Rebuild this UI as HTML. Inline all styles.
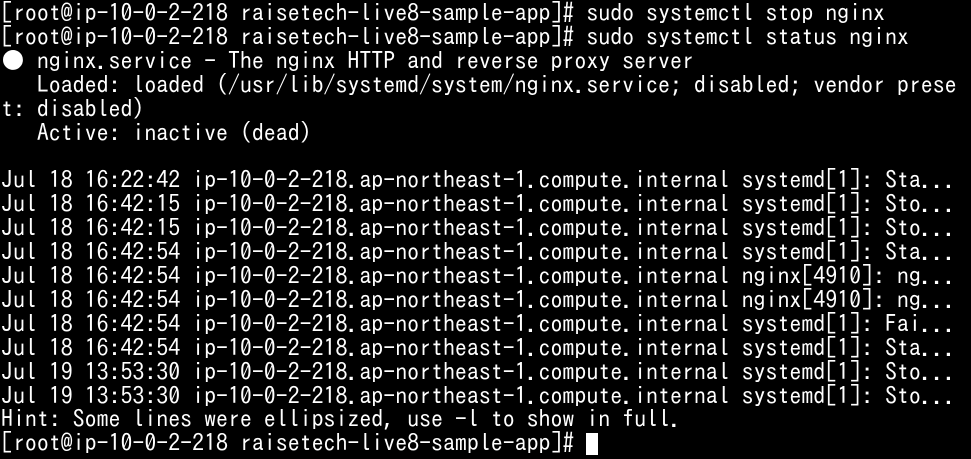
<!DOCTYPE html>
<html><head><meta charset="utf-8"><style>
html,body{margin:0;padding:0;background:#000;width:971px;height:459px;overflow:hidden}
pre{margin:0;padding:0 0 0 1px;color:#fff;font-family:"IPAGothic","Noto Sans CJK JP",monospace;font-size:23.9px;line-height:23.9px;position:relative;top:1px;white-space:pre}
.c{display:inline-block;width:12px;height:22px;background:#fff;vertical-align:-4px}
</style></head><body><pre>[root@ip-10-0-2-218 raisetech-live8-sample-app]# sudo systemctl stop nginx
[root@ip-10-0-2-218 raisetech-live8-sample-app]# sudo systemctl status nginx
● nginx.service - The nginx HTTP and reverse proxy server
   Loaded: loaded (/usr/lib/systemd/system/nginx.service; disabled; vendor prese
t: disabled)
   Active: inactive (dead)

Jul 18 16:22:42 ip-10-0-2-218.ap-northeast-1.compute.internal systemd[1]: Sta...
Jul 18 16:42:15 ip-10-0-2-218.ap-northeast-1.compute.internal systemd[1]: Sto...
Jul 18 16:42:15 ip-10-0-2-218.ap-northeast-1.compute.internal systemd[1]: Sto...
Jul 18 16:42:54 ip-10-0-2-218.ap-northeast-1.compute.internal systemd[1]: Sta...
Jul 18 16:42:54 ip-10-0-2-218.ap-northeast-1.compute.internal nginx[4910]: ng...
Jul 18 16:42:54 ip-10-0-2-218.ap-northeast-1.compute.internal nginx[4910]: ng...
Jul 18 16:42:54 ip-10-0-2-218.ap-northeast-1.compute.internal systemd[1]: Fai...
Jul 18 16:42:54 ip-10-0-2-218.ap-northeast-1.compute.internal systemd[1]: Sta...
Jul 19 13:53:30 ip-10-0-2-218.ap-northeast-1.compute.internal systemd[1]: Sto...
Jul 19 13:53:30 ip-10-0-2-218.ap-northeast-1.compute.internal systemd[1]: Sto...
Hint: Some lines were ellipsized, use -l to show in full.
[root@ip-10-0-2-218 raisetech-live8-sample-app]# <span class="c"></span></pre></body></html>
